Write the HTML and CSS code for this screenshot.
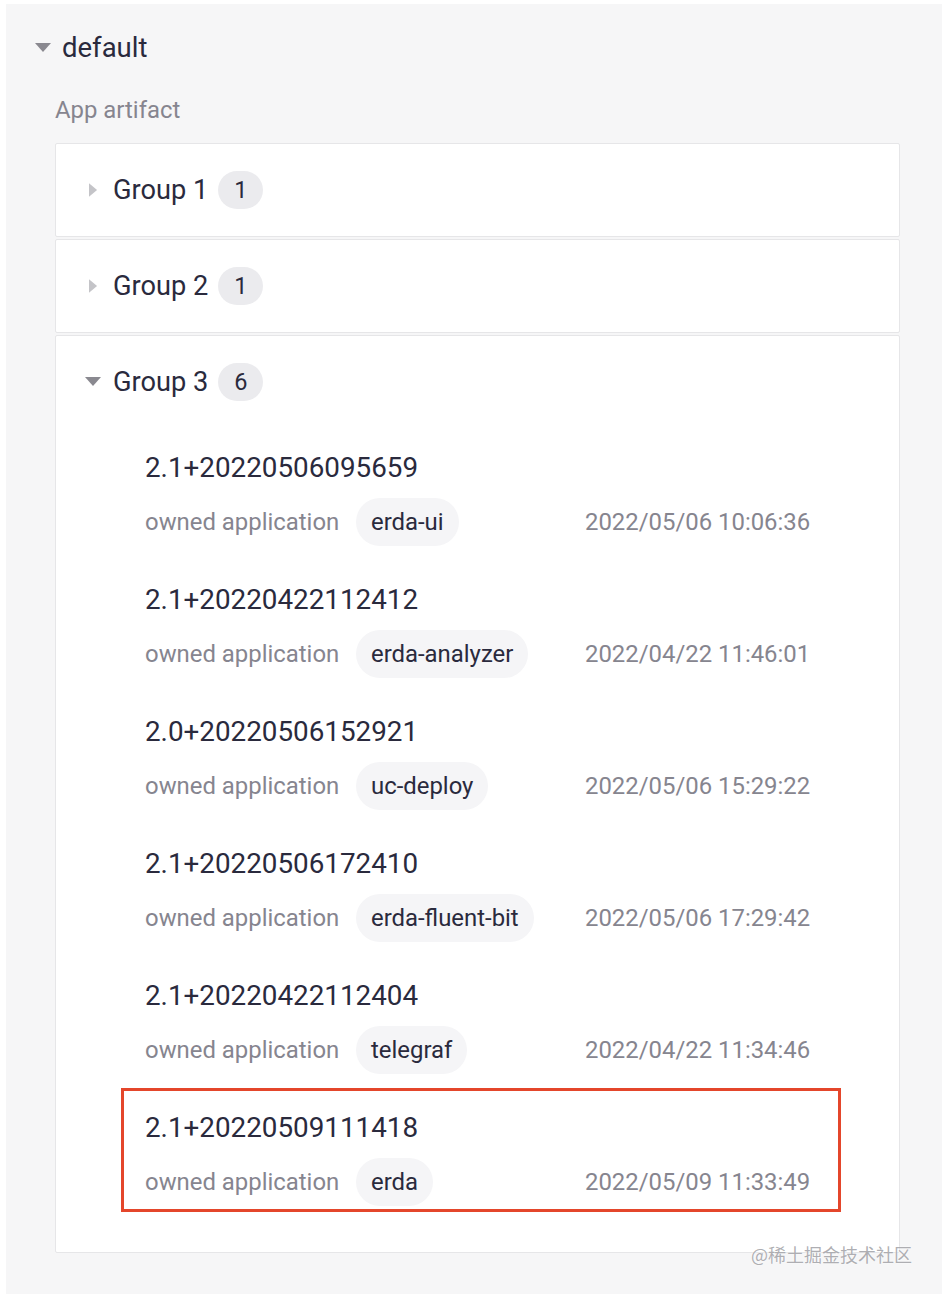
FILE: index.html
```html
<!DOCTYPE html>
<html lang="en">
<head>
<meta charset="utf-8">
<title>App artifact</title>
<link rel="stylesheet" href="styles.css">
</head>
<body>
<div class="panel">
  <div class="section-head">
    <svg class="caret-down" viewBox="0 0 16 10" width="16" height="10"><path d="M0 0 L16 0 L8 9 Z"/></svg>
    <span class="section-title">default</span>
  </div>
  <div class="subtitle">App artifact</div>
  <div class="groups">
    <div class="group">
      <div class="group-head">
        <svg class="caret-right" viewBox="0 0 10 16" width="9" height="15"><path d="M0 0 L9 7.5 L0 15 Z"/></svg>
        <span class="group-title">Group 1</span>
        <span class="badge">1</span>
      </div>
    </div>
    <div class="group">
      <div class="group-head">
        <svg class="caret-right" viewBox="0 0 10 16" width="9" height="15"><path d="M0 0 L9 7.5 L0 15 Z"/></svg>
        <span class="group-title">Group 2</span>
        <span class="badge">1</span>
      </div>
    </div>
    <div class="group open">
      <div class="group-head">
        <svg class="caret-down small" viewBox="0 0 16 10" width="16" height="10"><path d="M0 0 L16 0 L8 9 Z"/></svg>
        <span class="group-title">Group 3</span>
        <span class="badge">6</span>
      </div>
      <div class="items">
        <div class="item">
          <div class="version">2.1+20220506095659</div>
          <div class="meta"><span class="label">owned application</span><span class="tag-col"><span class="tag">erda-ui</span></span><span class="date">2022/05/06 10:06:36</span></div>
        </div>
        <div class="item">
          <div class="version">2.1+20220422112412</div>
          <div class="meta"><span class="label">owned application</span><span class="tag-col"><span class="tag">erda-analyzer</span></span><span class="date">2022/04/22 11:46:01</span></div>
        </div>
        <div class="item">
          <div class="version">2.0+20220506152921</div>
          <div class="meta"><span class="label">owned application</span><span class="tag-col"><span class="tag">uc-deploy</span></span><span class="date">2022/05/06 15:29:22</span></div>
        </div>
        <div class="item">
          <div class="version">2.1+20220506172410</div>
          <div class="meta"><span class="label">owned application</span><span class="tag-col"><span class="tag">erda-fluent-bit</span></span><span class="date">2022/05/06 17:29:42</span></div>
        </div>
        <div class="item">
          <div class="version">2.1+20220422112404</div>
          <div class="meta"><span class="label">owned application</span><span class="tag-col"><span class="tag">telegraf</span></span><span class="date">2022/04/22 11:34:46</span></div>
        </div>
        <div class="item highlight">
          <div class="version">2.1+20220509111418</div>
          <div class="meta"><span class="label">owned application</span><span class="tag-col"><span class="tag">erda</span></span><span class="date">2022/05/09 11:33:49</span></div>
        </div>
      </div>
    </div>
  </div>
  <div class="watermark">@稀土掘金技术社区</div>
</div>
</body>
</html>
```

FILE: styles.css
```css
html, body {
  margin: 0;
  padding: 0;
  background: #ffffff;
}
body {
  padding: 4px 0 1px 6px;
  font-family: Roboto, "Liberation Sans", "Noto Sans CJK SC", sans-serif;
  color: #2a2a3d;
}
.panel {
  position: relative;
  background: #f6f6f7;
  padding: 20px 42px 40px 29px;
  min-height: 1229px;
  box-sizing: border-box;
}
.section-head {
  display: flex;
  align-items: center;
  height: 48px;
}
.caret-down {
  fill: #8a8990;
}
.section-head .caret-down {
  width: 16px;
  margin-right: 11px;
}
.section-title {
  font-size: 27.5px;
  line-height: 48px;
}
.subtitle {
  margin: 22px 0 0 20px;
  font-size: 23.9px;
  line-height: 32px;
  color: #86858f;
}
.groups {
  margin: 17px 0 0 20px;
}
.group {
  background: #ffffff;
  border: 1px solid #e6e6e8;
  margin-bottom: 2px;
  border-radius: 2px;
}
.group-head {
  display: flex;
  align-items: center;
  height: 92px;
  padding-left: 33px;
}
.caret-right {
  fill: #c4c4c8;
  margin-right: 15px;
}
.caret-down.small {
  margin-left: -4px;
  margin-right: 12px;
}
.group-title {
  font-size: 27.2px;
  line-height: 36px;
}
.badge {
  margin-left: 10px;
  min-width: 45px;
  height: 38px;
  border-radius: 19px;
  background: #ebebee;
  font-size: 23.5px;
  line-height: 38px;
  text-align: center;
  box-sizing: border-box;
}
.items {
  padding: 0 0 40px 65px;
}
.item {
  width: 720px;
  box-sizing: border-box;
  border: 3px solid transparent;
  padding: 21px 0 3px 21px;
  margin-bottom: 8px;
}
.item:last-child {
  margin-bottom: 0;
}
.item.highlight {
  border-color: #e4462b;
}
.version {
  font-size: 27.8px;
  line-height: 32px;
}
.meta {
  display: flex;
  align-items: center;
  margin-top: 14px;
  height: 48px;
  font-size: 23.9px;
}
.label {
  color: #86858f;
  width: 211px;
}
.tag-col {
  width: 229px;
}
.tag {
  display: inline-block;
  height: 48px;
  line-height: 48px;
  padding: 0 15px;
  border-radius: 24px;
  background: #f5f5f7;
  color: #2a2a3d;
}
.date {
  color: #86858f;
}
.watermark {
  position: absolute;
  right: 30px;
  bottom: 28px;
  font-family: "Noto Sans CJK SC", sans-serif;
  font-size: 18px;
  color: rgba(160, 160, 165, 0.85);
  text-shadow: 0 0 2px #fff;
}
```
